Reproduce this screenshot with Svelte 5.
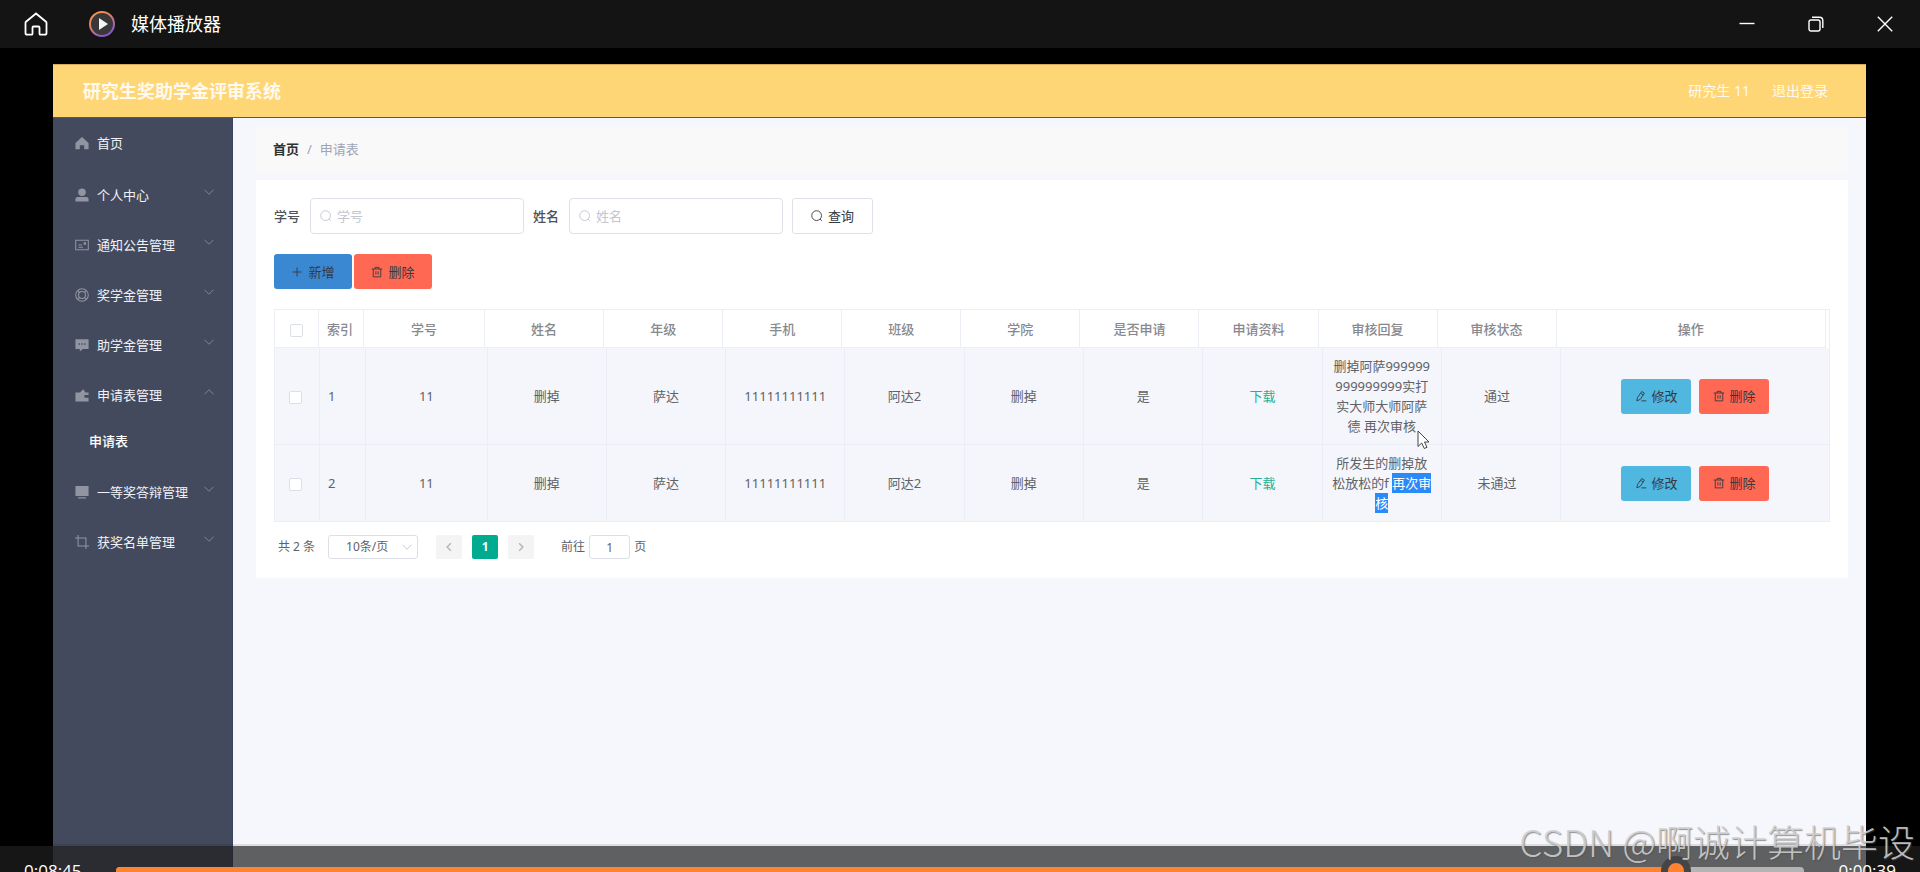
<script lang="ts">
	const menus = [
		{ name: '首页', icon: 'home' },
		{ name: '个人中心', icon: 'user', arrow: 'down' },
		{ name: '通知公告管理', icon: 'postcard', arrow: 'down' },
		{ name: '奖学金管理', icon: 'help', arrow: 'down' },
		{ name: '助学金管理', icon: 'comment', arrow: 'down' },
		{ name: '申请表管理', icon: 'wallet', arrow: 'up', children: ['申请表'] },
		{ name: '一等奖答辩管理', icon: 'monitor', arrow: 'down' },
		{ name: '获奖名单管理', icon: 'crop', arrow: 'down' }
	];

	const columns = [
		'学号',
		'姓名',
		'年级',
		'手机',
		'班级',
		'学院',
		'是否申请',
		'申请资料',
		'审核回复',
		'审核状态',
		'操作'
	];

	const rows = [
		{
			values: ['11', '删掉', '萨达', '11111111111', '阿达2', '删掉', '是'],
			reply: '删掉阿萨999999\n999999999实打\n实大师大师阿萨\n德 再次审核',
			selected: '',
			status: '通过'
		},
		{
			values: ['11', '删掉', '萨达', '11111111111', '阿达2', '删掉', '是'],
			reply: '所发生的删掉放\n松放松的f ',
			selected: '再次审\n核',
			status: '未通过'
		}
	];

	let studentNo = '';
	let studentName = '';
	let page = 1;
</script>

{#snippet icon(name: string)}
	<svg class="icon" viewBox="0 0 16 16" aria-hidden="true">
		{#if name === 'home'}
			<path fill="currentColor" d="M8 1 15.500 8v7h-5v-4.500h-5V15h-5V8z" />
		{:else if name === 'user'}
			<circle cx="8" cy="4.800" r="4.300" fill="currentColor" />
			<path fill="currentColor" d="M.5 15.500V13q0-2.700 3-2.700h9q3 0 3 2.700v2.500z" />
		{:else if name === 'postcard'}
			<path class="line" d="M.8 2.500h14.400v11H.8zM4 8h4M4 10.500h5M10.500 5.500h1.500V7h-1.500z" />
		{:else if name === 'help'}
			<circle class="line" cx="8" cy="8" r="7.200" />
			<circle class="line" cx="8" cy="8" r="4" />
			<path class="line" d="m5 5-2-2M11 5l2-2M5 11l-2 2M11 11l2 2" />
		{:else if name === 'comment'}
			<path
				fill="currentColor"
				fill-rule="evenodd"
				d="M.5 1.500h15v11H9l-3.500 3v-3h-5zM4 6v1.600h1.600V6zM7.200 6v1.600h1.600V6zM10.400 6v1.600H12V6z"
			/>
		{:else if name === 'wallet'}
			<path fill="currentColor" d="M.5 5h5l4-3.500L12 5h3.500v3H12a1.500 1.500 0 0 0 0 3h3.500v4.500H.5z" />
		{:else if name === 'monitor'}
			<path fill="currentColor" d="M.5 1h15v11.500H.5zM3.500 14h9v1.500h-9z" />
		{:else if name === 'crop'}
			<path class="line" d="M0 3.500h12.500V16M3.500 0v12.500H16" />
		{:else if name === 'search'}
			<circle class="line" cx="7.500" cy="7.500" r="6.500" />
			<path class="line" d="m12 12 2.500 2.500" />
		{:else if name === 'plus'}
			<path class="line" d="M8 2v12M2 8h12" />
		{:else if name === 'delete'}
			<path class="line" d="M1 4h14M3 4v10.500h10V4M5.500 4V1.800h5V4M6.500 7v4.500M9.500 7v4.500" />
		{:else if name === 'edit'}
			<path class="line" d="m9 2 3.500 2.200-5.500 8.300-4.500 2 .8-4.500zM7.500 4.500 11 6.800M8.500 14.500H15" />
		{:else if name === 'down'}
			<path class="line" d="m2 5 6 6 6-6" />
		{:else if name === 'up'}
			<path class="line" d="m2 11 6-6 6 6" />
		{:else if name === 'left'}
			<path class="line" d="M10.500 3 5.500 8l5 5" />
		{:else if name === 'right'}
			<path class="line" d="m5.500 3 5 5-5 5" />
		{/if}
	</svg>
{/snippet}

<div class="player">
	<div class="titlebar">
		<button class="win-btn home-btn" aria-label="主页">
			<svg width="24" height="24" viewBox="0 0 24 24">
				<path
					d="M12 1.500 2 9.700Q1.500 10.200 1.500 11v10q0 1.700 1.700 1.700h4.300q1 0 1-1v-6.200q0-1 1-1h5q1 0 1 1v6.200q0 1 1 1h4.300q1.700 0 1.700-1.700V11q0-.8-.5-1.300z"
				/>
			</svg>
		</button>
		<svg class="logo" width="28" height="28" viewBox="0 0 28 28" aria-hidden="true">
			<defs>
				<linearGradient id="ring" x1="0" y1="0" x2=".6" y2="1">
					<stop offset="0" stop-color="#ff9a3c" />
					<stop offset=".45" stop-color="#e0806c" />
					<stop offset="1" stop-color="#8a56d0" />
				</linearGradient>
			</defs>
			<circle cx="14" cy="14" r="12" fill="#383838" stroke="url(#ring)" stroke-width="2" />
			<path d="M11 8v12l9-6z" fill="#f4f4f4" />
		</svg>
		<span class="app-name">媒体播放器</span>
		<div class="win-btns">
			<button class="win-btn" aria-label="最小化">
				<svg width="16" height="16" viewBox="0 0 16 16"><path d="M.5 7.500h15" /></svg>
			</button>
			<button class="win-btn" aria-label="还原">
				<svg width="16" height="16" viewBox="0 0 16 16">
					<rect x="1" y="4" width="11" height="11" rx="2" />
					<path d="M4 1.200h7.500q3.300 0 3.300 3.300V12" />
				</svg>
			</button>
			<button class="win-btn" aria-label="关闭">
				<svg width="16" height="16" viewBox="0 0 16 16"><path d="m.8.8 14.400 14.400M15.200.8.8 15.200" /></svg>
			</button>
		</div>
	</div>

	<div class="screen">
		<header class="navbar">
			<h1>研究生奖助学金评审系统</h1>
			<span>研究生 11</span>
			<a href="#logout">退出登录</a>
		</header>
		<div class="body">
			<nav class="sidebar">
				<ul>
					{#each menus as menu}
						<li>
							<a class="menu-item" href="#menu">
								{@render icon(menu.icon)}
								<span>{menu.name}</span>
								{#if menu.arrow}
									<i class="arrow">{@render icon(menu.arrow)}</i>
								{/if}
							</a>
							{#if menu.children}
								<ul class="sub-menu">
									{#each menu.children as child}
										<li><a href="#sub">{child}</a></li>
									{/each}
								</ul>
							{/if}
						</li>
					{/each}
				</ul>
			</nav>

			<main>
				<div class="breadcrumb">
					<a href="#home">首页</a>
					<span class="sep">/</span>
					<span class="current">申请表</span>
				</div>

				<div class="card">
					<form class="search" onsubmit={(e) => e.preventDefault()}>
						<label for="student-no">学号</label>
						<div class="input">
							{@render icon('search')}
							<input id="student-no" type="text" placeholder="学号" bind:value={studentNo} />
						</div>
						<label for="student-name">姓名</label>
						<div class="input">
							{@render icon('search')}
							<input id="student-name" type="text" placeholder="姓名" bind:value={studentName} />
						</div>
						<button class="btn query">{@render icon('search')}查询</button>
					</form>

					<div class="actions">
						<button class="btn add">{@render icon('plus')}新增</button>
						<button class="btn danger">{@render icon('delete')}删除</button>
					</div>

					<div class="table">
						<table class="thead">
							<colgroup>
								<col class="c-check" /><col class="c-index" /><col class="c-no" />
								<col span="9" class="c-data" /><col class="c-ops" />
							</colgroup>
							<thead>
								<tr>
									<th><input type="checkbox" aria-label="全选" /></th>
									<th class="index">索引</th>
									{#each columns as column}
										<th>{column}</th>
									{/each}
								</tr>
							</thead>
						</table>
						<table class="tbody">
							<colgroup>
								<col class="c-check" /><col class="c-index" /><col class="c-no" />
								<col span="9" class="c-data" /><col class="c-ops" />
							</colgroup>
							<tbody>
								{#each rows as row, i}
									<tr>
										<td class="check"><input type="checkbox" aria-label="选择第{i + 1}行" /></td>
										<td class="index">{i + 1}</td>
										{#each row.values as value}
											<td>{value}</td>
										{/each}
										<td><a class="download" href="#download">下载</a></td>
										<td class="reply">
											<div class="reply-text">{row.reply}{#if row.selected}<mark>{row.selected}</mark>{/if}</div>
											{#if i === 0}
												<svg class="pointer" width="14" height="20" viewBox="0 0 14 20" aria-hidden="true">
													<path d="M1 1v15.500l3.700-3.500 2.600 5.500 2.700-1.200L7.500 12H12z" />
												</svg>
											{/if}
										</td>
										<td class="status">{row.status}</td>
										<td>
											<div class="ops">
												<button class="btn edit">{@render icon('edit')}修改</button>
												<button class="btn danger">{@render icon('delete')}删除</button>
											</div>
										</td>
									</tr>
								{/each}
							</tbody>
						</table>
					</div>

					<div class="pagination">
						<span>共 2 条</span>
						<div class="size">
							<select aria-label="每页条数">
								<option>10条/页</option>
								<option>20条/页</option>
							</select>
							{@render icon('down')}
						</div>
						<div class="pager">
							<button aria-label="上一页">{@render icon('left')}</button>
							<button class="active">1</button>
							<button aria-label="下一页">{@render icon('right')}</button>
						</div>
						<label class="jump">前往<input type="text" bind:value={page} />页</label>
					</div>
				</div>
			</main>
		</div>
	</div>

	<div class="controls">
		<span class="time">0:08:45</span>
		<div class="track">
			<div class="played"></div>
			<div class="thumb"></div>
		</div>
		<span class="time">0:00:39</span>
	</div>
	<div class="watermark">CSDN @啊诚计算机毕设</div>
</div>

<style>
	:global(body) {
		background: #000;
	}

	.player {
		position: relative;
		display: flex;
		flex-direction: column;
		height: 100vh;
		overflow: hidden;
		background: #000;
		color: #606266;
		font-family: 'Noto Sans', 'Noto Sans CJK SC', sans-serif;
		font-size: 13px;
		line-height: 20px;
	}

	button,
	input,
	select {
		box-sizing: border-box;
		font: inherit;
		color: inherit;
	}

	button {
		padding: 0;
		border: 0;
		cursor: pointer;
	}

	a {
		color: inherit;
		text-decoration: none;
	}

	ul {
		margin: 0;
		padding: 0;
		list-style: none;
	}

	.icon {
		flex: none;
		width: 12px;
		height: 12px;
	}

	.line {
		fill: none;
		stroke: currentColor;
		stroke-width: 1.2;
	}

	/* window title bar */
	.titlebar {
		display: flex;
		flex: none;
		align-items: center;
		height: 48px;
		background: #141414;
		color: #fff;
	}

	.win-btn {
		display: flex;
		align-items: center;
		justify-content: center;
		width: 69px;
		height: 48px;
		background: none;
	}

	.win-btn svg {
		fill: none;
		stroke: #fff;
		stroke-width: 1.4;
	}

	.home-btn {
		width: 72px;
	}

	.home-btn svg {
		stroke-width: 1.8;
	}

	.logo {
		margin-left: 16px;
	}

	.app-name {
		margin-left: 15px;
		font-size: 18px;
	}

	.win-btns {
		display: flex;
		margin: 0 1px 0 auto;
	}

	/* recorded page */
	.screen {
		display: flex;
		flex: 1;
		flex-direction: column;
		margin: 16px 54px 0 53px;
		background: #f6f7fc;
	}

	.navbar {
		display: flex;
		flex: none;
		align-items: center;
		box-sizing: border-box;
		height: 54px;
		padding: 0 38px 0 30px;
		border-top: 1px solid #d9a85a;
		border-bottom: 1px solid #5d584f;
		background: #ffd676;
		color: #fffaf0;
		font-size: 14px;
	}

	.navbar h1 {
		margin: 0 auto 0 0;
		font-size: 18px;
	}

	.navbar a {
		margin-left: 22px;
	}

	.body {
		display: flex;
		flex: 1;
	}

	.sidebar {
		flex: none;
		box-sizing: border-box;
		width: 180px;
		border-right: 1px solid #3b4366;
		background: #434a5d;
		color: #f0f2f8;
	}

	.menu-item {
		display: flex;
		align-items: center;
		height: 50px;
		padding: 0 17px 0 22px;
	}

	.sidebar > ul > li:first-child {
		padding-bottom: 2px;
	}

	.menu-item > :global(.icon) {
		width: 14px;
		height: 14px;
		margin-right: 8px;
		color: #9195a1;
	}

	.arrow {
		display: flex;
		margin-left: auto;
		padding-bottom: 6px;
		color: #868b98;
	}

	.sub-menu {
		padding: 0 0 4px 36px;
		line-height: 43px;
		color: #fff;
		font-weight: 500;
	}

	main {
		flex: 1;
		min-width: 0;
		padding: 9px 18px 0 23px;
	}

	.breadcrumb {
		display: flex;
		align-items: center;
		box-sizing: border-box;
		height: 46px;
		padding: 0 17px 2px;
		background: #f9f9fa;
		color: #9fa3b5;
	}

	.breadcrumb a {
		color: #303133;
		font-weight: 600;
	}

	.sep {
		margin: 0 8px;
	}

	.card {
		margin-top: 7px;
		padding: 18px 18px 19px;
		background: #fff;
	}

	.search {
		display: flex;
		align-items: center;
	}

	.search label {
		width: 36px;
		color: #505256;
		font-weight: 500;
	}

	.input {
		display: flex;
		align-items: center;
		box-sizing: border-box;
		width: 214px;
		height: 36px;
		margin-right: 9px;
		padding: 0 9px;
		border: 1px solid #dfe1e8;
		border-radius: 4px;
		color: #c0c4cc;
	}

	.input input {
		width: 100%;
		margin-left: 5px;
		padding: 0;
		border: 0;
		outline: 0;
		background: none;
		color: #606266;
	}

	.input input::placeholder {
		color: #c3c6cf;
	}

	.btn {
		display: flex;
		align-items: center;
		justify-content: center;
		gap: 5px;
		width: 78px;
		height: 35px;
		border-radius: 3px;
		color: #363a40;
	}

	.btn.query {
		width: 81px;
		height: 36px;
		border: 1px solid #dfe1e8;
		background: #fff;
	}

	.actions {
		display: flex;
		gap: 2px;
		margin: 20px 0;
	}

	.btn.add {
		background: #3b88d2;
	}

	.btn.danger {
		background: #ff6853;
	}

	.btn.edit {
		background: #4fb7e0;
	}

	/* header is a few pixels narrower than the rows */
	.table {
		box-sizing: border-box;
		border: 1px solid #ebeef5;
		border-bottom: 0;
	}

	table {
		width: 100%;
		border-spacing: 0;
		table-layout: fixed;
	}

	.thead {
		width: calc(100% - 3px);
	}

	.c-check {
		width: 44px;
	}

	.c-index {
		width: 45px;
	}

	.c-no {
		width: 121px;
	}

	.c-data {
		width: 119px;
	}

	.c-ops {
		width: 269px;
	}

	.tbody .c-check {
		width: 45px;
	}

	.tbody .c-index {
		width: 46px;
	}

	.tbody .c-no {
		width: 121px;
	}

	.tbody .c-ops {
		width: 267px;
	}

	th,
	td {
		padding: 8px;
		border-right: 1px solid #ebeef5;
		border-bottom: 1px solid #ebeef5;
		text-align: center;
	}

	th {
		height: 21px;
		color: #87898f;
		font-weight: 500;
	}

	td {
		background: #f5f6fb;
	}

	.tbody td:last-child {
		border-right: 0;
	}

	.tbody .check {
		padding-right: 12px;
	}

	.tbody .status {
		padding-right: 16px;
	}

	.index {
		text-align: left;
	}

	input[type='checkbox'] {
		display: block;
		width: 13px;
		height: 13px;
		margin: 3px auto 0;
		border: 1px solid #dcdfe6;
		border-radius: 2px;
		background: #fff;
		appearance: none;
	}

	.download {
		color: #22b297;
	}

	.reply {
		position: relative;
		padding: 8px 0;
	}

	.reply-text {
		white-space: pre-line;
	}

	mark {
		padding: 1px 0;
		background: #2b8af8;
		color: #fff;
	}

	.pointer {
		position: absolute;
		right: 10px;
		bottom: -6px;
		z-index: 1;
		fill: #fff;
		stroke: #444;
	}

	.ops {
		display: flex;
		justify-content: center;
		gap: 8px;
	}

	.ops .btn {
		width: 70px;
	}

	.pagination {
		display: flex;
		align-items: center;
		height: 24px;
		margin-top: 13px;
		padding-left: 4px;
		font-size: 12px;
	}

	.size {
		display: flex;
		align-items: center;
		box-sizing: border-box;
		width: 90px;
		height: 24px;
		margin-left: 13px;
		padding-right: 4px;
		border: 1px solid #dcdfe6;
		border-radius: 3px;
		color: #c0c4cc;
	}

	.size select {
		flex: 1;
		padding: 0 0 0 17px;
		border: 0;
		background: none;
		color: #606266;
		appearance: none;
	}

	.pager {
		display: flex;
		gap: 10px;
		margin: 0 27px 0 18px;
	}

	.pager button {
		display: flex;
		align-items: center;
		justify-content: center;
		width: 26px;
		height: 24px;
		border-radius: 2px;
		background: #f4f4f5;
		color: #b4b7be;
	}

	.pager .line {
		stroke-width: 2;
	}

	.pager .active {
		background: #00ab90;
		color: #fff;
		font-weight: 700;
	}

	.jump {
		display: flex;
		align-items: center;
		gap: 4px;
	}

	.jump input {
		width: 41px;
		height: 24px;
		padding: 0;
		border: 1px solid #dcdfe6;
		border-radius: 3px;
		background: #fff;
		text-align: center;
	}

	/* playback bar, partly below the window edge */
	.controls {
		position: absolute;
		right: 0;
		bottom: 0;
		left: 0;
		display: flex;
		align-items: flex-start;
		box-sizing: border-box;
		height: 26px;
		padding: 13px 24px 0;
		overflow: hidden;
		background: rgba(31, 31, 31, 0.7);
		box-shadow: 0 -2px 0 rgba(0, 0, 0, 0.1);
		color: #fff;
		font-family: 'Open Sans', sans-serif;
		font-size: 17px;
		line-height: 24px;
	}

	.track {
		display: flex;
		flex: 1;
		align-items: center;
		height: 8px;
		margin: 8px 34px 0;
		border-radius: 4px;
		background: #b4b4b4;
	}

	.played {
		width: 92%;
		height: 8px;
		border-radius: 4px 0 0 4px;
		background: #ff8330;
	}

	.thumb {
		box-sizing: border-box;
		flex: none;
		width: 30px;
		height: 30px;
		margin-left: -8px;
		border: 7px solid #454545;
		border-radius: 50%;
		background: #ff8330;
	}

	.watermark {
		position: absolute;
		right: 5px;
		bottom: 6px;
		color: rgba(208, 208, 208, 0.9);
		font-family: 'Noto Sans CJK SC', sans-serif;
		font-size: 37px;
		font-weight: 300;
		line-height: 50px;
		text-shadow: 1px 1px 1px rgba(80, 80, 80, 0.6);
	}
</style>
